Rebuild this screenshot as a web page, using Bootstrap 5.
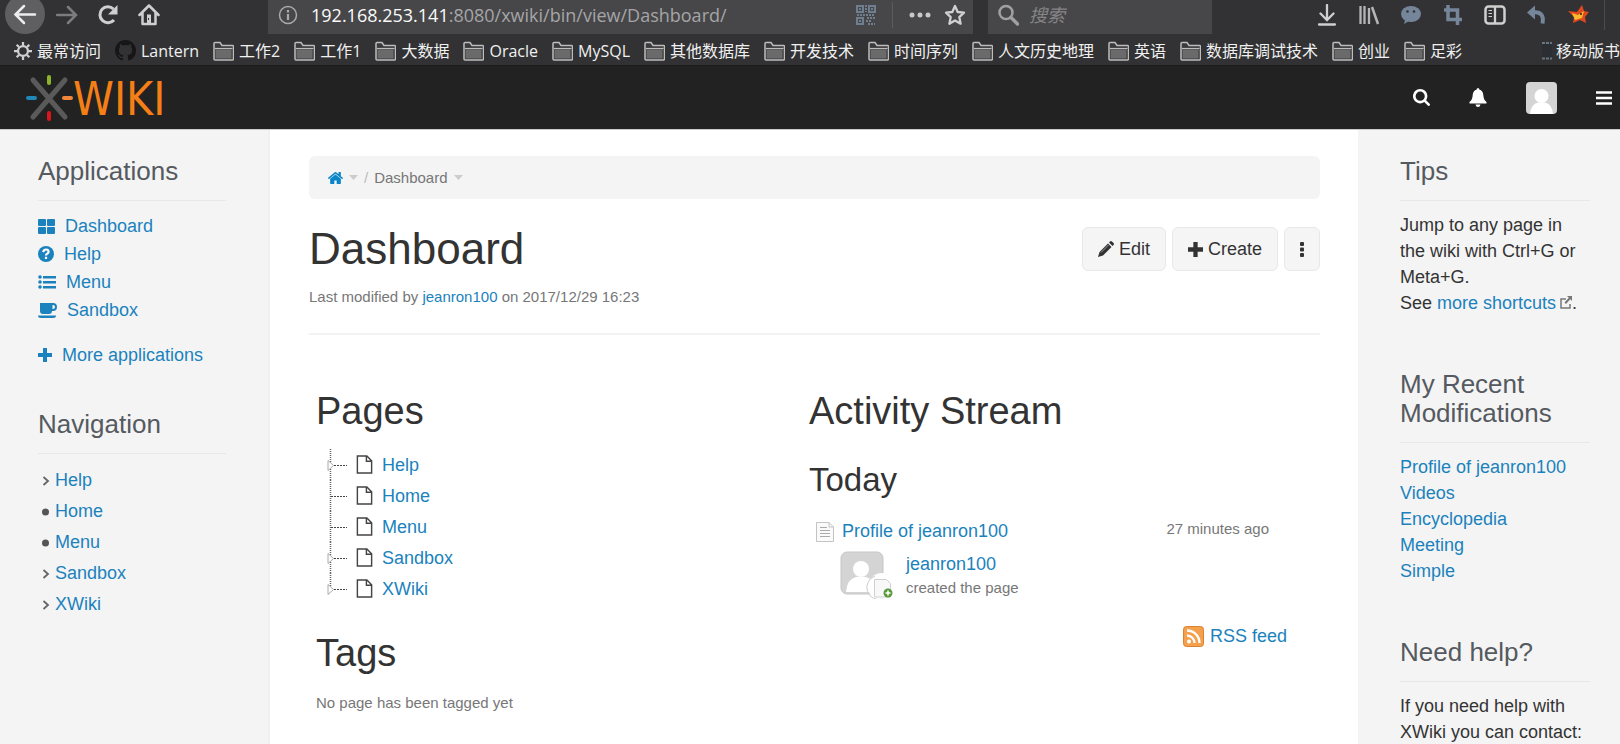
<!DOCTYPE html>
<html lang="en">
<head>
<meta charset="utf-8">
<meta name="viewport" content="width=device-width, initial-scale=1">
<title>Dashboard - XWiki</title>
<link href="https://cdn.jsdelivr.net/npm/bootstrap@5.3.0/dist/css/bootstrap.min.css" rel="stylesheet">
<style>
  body { font: 18px/26px "Liberation Sans", Arial, sans-serif; color: #333; background: #fff; }
  a { color: #1b82bd; text-decoration: none; }
  svg { display: block; flex: none; }
  h1, h2, h3, h4, p, ul { margin: 0; }

  /* browser chrome */
  .chrome { background: #323234; color: #f0f0f0; font: 16px/24px "Open Sans", "Noto Sans CJK SC", sans-serif; }
  .tools { height: 34px; }
  .chrome-btn { background: none; border: 0; padding: 0; color: #c8c8c8; display: flex; align-items: center; }
  .nav-btns { width: 268px; padding-left: 5px; gap: 11px; }
  .field { background: #474749; font-size: 18px; color: #a5a5a7; padding-bottom: 4px; }
  .field input { background: none; border: 0; outline: 0; padding: 0; color: inherit; min-width: 0; }
  .field input::placeholder { color: #858587; font-style: italic; opacity: 1; }
  .url-field { flex: 1 1 705px; padding-left: 10px; padding-right: 7px; }
  .url-host { color: #fafafa; margin-left: 13px; }
  .dots-btn { margin-right: 13px; }
  .search-field { flex: 0 1 224px; margin-left: 15px; padding-left: 10px; gap: 10px; }
  .field-split { width: 1px; height: 26px; background: #5c5c5e; }
  .tool-icons { flex: 0 1 408px; padding-right: 15px; padding-bottom: 4px; gap: 20px; }
  .tool-split { width: 1px; height: 30px; background: #4c4c4e; margin-left: -6px; }
  .marks { height: 32px; padding: 2px 0 0 14px; gap: 14px; white-space: nowrap; border-bottom: 1px solid #1b1b1b; }
  .marks a { color: inherit; display: flex; align-items: center; gap: 5px; flex: none; }
  .marks .last-mark { gap: 4px; }

  /* wiki header */
  .wiki-bar { background: #222; height: 64px; border-bottom: 1px solid #ccc; padding: 0 8px 0 26px; gap: 39px; }
  .wiki-bar .logo-text { font: 46px "DejaVu Sans Condensed", "DejaVu Sans", sans-serif; fill: #f57f17; }
  .wiki-bar button { background: none; border: 0; padding: 0; color: #fff; }

  /* side panels */
  .side { background: #f4f4f4; padding-top: 27px; }
  .side-left { flex: 0 0 270px; padding-left: 38px; padding-right: 42px; border-right: 2px solid #f0f0f0; }
  .side-right { flex: 0 0 262px; padding-left: 42px; padding-right: 30px; }
  .side h2 { font-size: 26px; line-height: 29px; font-weight: 400; color: #555a60; padding-bottom: 14px; border-bottom: 1px solid #e8e8e8; margin-bottom: 11px; }
  .side section + section { margin-top: 54px; }
  .side-left section + section { margin-top: 41px; }
  .apps a { display: flex; align-items: center; line-height: 28px; gap: 10px; }
  .apps .more { margin-top: 17px; }
  .tree-nav a { display: flex; align-items: center; line-height: 31px; gap: 5px; padding-left: 3px; }
  .recent a { display: block; }

  /* main column */
  .content { padding: 26px 38px 0 39px; }
  .crumbs { background: #f4f4f4; border-radius: 6px; height: 43px; padding: 0 19px; gap: 6px; }
  .minor { font-size: 15px; line-height: 22px; color: #777; }
  .title-row { margin-top: 26px; }
  .title-row h1 { font-size: 44px; line-height: 48px; font-weight: 400; }
  .actions { gap: 6px; padding-top: 2px; }
  .tool-btn { height: 44px; padding: 0 15px; border: 1px solid #e8e8e8; background: #f5f5f5; border-radius: 6px; font-size: 18px; color: #333; display: flex; align-items: center; gap: 5px; }
  .meta { margin-top: 13px; padding-bottom: 25px; border-bottom: 2px solid #f3f3f3; }
  .gadgets { padding: 55px 18px 0 7px; }
  .gadgets h2 { font-size: 38px; line-height: 42px; font-weight: 400; }
  .gadgets h3 { font-size: 33px; line-height: 36px; font-weight: 400; margin: 30px 0 20px; }
  .page-tree { margin: 17px 0 28px; padding-left: 9px; }
  .page-tree li { height: 31px; display: flex; align-items: center; }
  .page-tree a { margin-left: 9px; }
  .no-tags { padding-top: 18px; }
  .event { padding: 0 33px 0 7px; }
  .who { padding-left: 31px; margin-top: 7px; gap: 13px; }
  .rss { margin: 24px 15px 0 0; gap: 6px; }
</style>
</head>
<body class="min-vh-100 d-flex flex-column overflow-hidden">

<!-- shared symbols -->
<svg width="0" height="0" class="position-absolute" aria-hidden="true">
  <symbol id="folder" viewBox="0 0 21 20"><path d="M1 18V2.500q0-1 1-1h5l2 3h10.500q1 0 1 1V18q0 1-1 1h-17.500q-1 0-1-1z" fill="#3a3a3c" stroke="#bdbdbd" stroke-width="1.500"/><path d="M2.500 8.500h16v9h-16z" fill="#6a6a6a"/><path d="M2 7.500h17.500" stroke="#bdbdbd" stroke-width="1.200"/></symbol>
  <symbol id="leaf" viewBox="0 0 17 20"><path d="M1 1h10l5 5v13H1z M10.500 1v5.500H16" fill="#fff" stroke="#444" stroke-width="1.500"/></symbol>
  <symbol id="branch" viewBox="0 0 26 31"><path d="M5.500 0V31" stroke="#666" stroke-width="1.500" stroke-dasharray="1 1"/><path d="M6 16.500H22" stroke="#444" stroke-width="1" stroke-dasharray="2 1"/></symbol>
  <symbol id="branch-open" viewBox="0 0 26 31"><path d="M5.500 0V31" stroke="#666" stroke-width="1.500" stroke-dasharray="1 1"/><path d="M9 16.500H22" stroke="#444" stroke-width="1" stroke-dasharray="2 1"/><path d="M3 11.500v10l5.500-5z" fill="#fff" stroke="#aaa"/></symbol>
  <symbol id="branch-last" viewBox="0 0 26 31"><path d="M5.500 0V13" stroke="#666" stroke-width="1.500" stroke-dasharray="1 1"/><path d="M9 16.500H22" stroke="#444" stroke-width="1" stroke-dasharray="2 1"/><path d="M3 11.500v10l5.500-5z" fill="#fff" stroke="#aaa"/></symbol>
  <symbol id="angle" viewBox="0 0 8 12"><path d="M2 2l4.500 4L2 10" fill="none" stroke="#666" stroke-width="1.800"/></symbol>
  <symbol id="dot" viewBox="0 0 8 12"><circle cx="4" cy="6" r="3.500" fill="#555"/></symbol>
  <symbol id="plus" viewBox="0 0 14 14"><path d="M5 0h4v5h5v4H9v5H5V9H0V5h5z" fill="currentColor"/></symbol>
  <symbol id="caret" viewBox="0 0 9 5"><path d="M0 0h9L4.500 5z" fill="#ccc"/></symbol>
  <symbol id="person" viewBox="0 0 31 32"><rect width="31" height="32" rx="4" fill="#d4d4d4"/><circle cx="15.500" cy="14" r="7" fill="#fff"/><path d="M4 32q1-10 8-11.500h7q7 1.500 8 11.500z" fill="#fff"/></symbol>
</svg>

<header class="chrome">
  <div class="tools d-flex align-items-stretch overflow-hidden">
    <div class="nav-btns d-flex flex-shrink-0">
      <button class="chrome-btn" aria-label="Back"><svg width="40" height="34" viewBox="0 0 40 34" fill="none"><circle cx="20" cy="14" r="20" fill="#5f5f61"/><path d="M30 14.500H11M19 6l-8.500 8.500L19 23" stroke="#ededed" stroke-width="2.500" stroke-linecap="round"/></svg></button>
      <button class="chrome-btn" aria-label="Forward"><svg width="22" height="34" viewBox="0 0 22 34" fill="none"><path d="M1 15h19M12 7l8 8-8 8" stroke="#7c7c7e" stroke-width="2.500" stroke-linecap="round"/></svg></button>
      <button class="chrome-btn ms-2" aria-label="Reload"><svg width="22" height="34" viewBox="0 0 22 34" fill="none"><path d="M16.500 9A8 8 0 1 0 17 20" stroke="#cfcfcf" stroke-width="3"/><path d="M20.500 5v9.500H11z" fill="#cfcfcf"/></svg></button>
      <button class="chrome-btn ms-2" aria-label="Home"><svg width="22" height="34" viewBox="0 0 22 34" fill="none"><path d="M1.500 15L11 5.500 20.500 15M4.500 13v11h13V13" stroke="#cfcfcf" stroke-width="2.500" stroke-linecap="round" stroke-linejoin="round"/><path d="M9 14.500h4V23H9z" fill="#cfcfcf"/><path d="M10.500 18v2" stroke="#323234"/></svg></button>
    </div>
    <div class="field url-field d-flex align-items-center">
      <svg width="20" height="20" viewBox="0 0 20 20" fill="none" stroke="#a9a9ab"><circle cx="10" cy="10" r="8.500" stroke-width="1.500"/><path d="M10 9v6M10 5v2.500" stroke-width="2.200"/></svg>
      <label class="url-host" for="address">192.168.253.141</label>
      <input id="address" class="flex-grow-1" type="text" value=":8080/xwiki/bin/view/Dashboard/">
      <svg class="me-3" width="20" height="20" viewBox="0 0 20 20" fill="none" stroke="#6f7f90" stroke-width="2"><path d="M1 1h6v6H1zM13 1h6v6h-6zM1 13h6v6H1z"/><path d="M4 3v2M16 3v2M4 15v2M9 1h2M10 3v4M1 10h18M11 13h8M10 16h6M12 19h7" stroke-dasharray="2 1"/></svg>
      <span class="field-split me-3"></span>
      <button class="chrome-btn dots-btn" aria-label="Page actions"><svg width="22" height="6" viewBox="0 0 22 6" fill="currentColor"><circle cx="3" cy="3" r="2.500"/><circle cx="11" cy="3" r="2.500"/><circle cx="19" cy="3" r="2.500"/></svg></button>
      <button class="chrome-btn" aria-label="Bookmark"><svg width="22" height="22" viewBox="0 0 22 22" fill="none"><path d="M11 2l2.700 6 6.300.7-4.700 4.400 1.300 6.600L11 16.500l-5.600 3.200 1.300-6.600L2 8.700 8.300 8z" stroke="#d0d0d0" stroke-width="2.300" stroke-linejoin="round"/></svg></button>
    </div>
    <div class="field search-field d-flex align-items-center">
      <svg width="21" height="22" viewBox="0 0 21 22" fill="none" stroke="#a0a0a2"><circle cx="8" cy="8.500" r="6.500" stroke-width="2.500"/><path d="M13 13.500l6.500 6.500" stroke-width="3.500" stroke-linecap="round"/></svg>
      <input class="w-100" type="search" aria-label="Search" placeholder="搜索">
    </div>
    <div class="tool-icons d-flex align-items-center justify-content-end">
      <button class="chrome-btn" aria-label="Downloads"><svg width="22" height="22" viewBox="0 0 22 22" fill="none" stroke="#cfcfcf" stroke-width="2.300" stroke-linecap="round"><path d="M11 1v14M4.500 9.500L11 16l6.500-6.500M3 20.500h16"/></svg></button>
      <button class="chrome-btn" aria-label="Library"><svg width="22" height="20" viewBox="0 0 22 20" fill="none" stroke="#b5b5b5"><path d="M2.500 1v18M6.500 1v18M11 3v16" stroke-width="2.300"/><path d="M14 2l6 17" stroke-width="2.500"/></svg></button>
      <button class="chrome-btn" aria-label="Chat"><svg width="22" height="20" viewBox="0 0 22 20"><ellipse cx="11" cy="9" rx="10" ry="8" fill="#75859a"/><path d="M5 15l-1 4 5-3z" fill="#75859a"/><circle cx="7.500" cy="6.500" r="1.300" fill="#323234"/><circle cx="14" cy="6.500" r="1.300" fill="#323234"/></svg></button>
      <button class="chrome-btn" aria-label="Crop"><svg width="22" height="20" viewBox="0 0 22 20" fill="none" stroke="#75859a" stroke-width="3.500"><path d="M6 0v14.500h14M2 5h13.500v15"/></svg></button>
      <button class="chrome-btn" aria-label="Sidebar"><svg width="22" height="20" viewBox="0 0 22 20" fill="none" stroke="#cfcfcf"><rect x="1.500" y="1.500" width="19" height="17" rx="3" stroke-width="2.500"/><path d="M11 2v16" stroke-width="2.300"/><path d="M4.500 5.500H8M4.500 8.500H8M4.500 11.500H8"/></svg></button>
      <button class="chrome-btn" aria-label="Undo"><svg width="22" height="20" viewBox="0 0 22 20" fill="none"><path d="M1 7.500L9 .5v14z" fill="#75859a"/><path d="M7 7.500c8-1 11 3 9.500 11" stroke="#75859a" stroke-width="4"/></svg></button>
      <button class="chrome-btn" aria-label="Extension"><svg width="22" height="20" viewBox="0 0 22 20"><path d="M14 0l2 6 5 1-4 5 1 6-6-3-7 3 1-6-6-6 9 1z" fill="#e0491f"/><path d="M4 8l6 2 6-4-2 7-7 2z" fill="#fdb92c"/><circle cx="13" cy="9" r="1" fill="#222"/></svg></button>
      <span class="tool-split"></span>
    </div>
  </div>
  <nav class="marks d-flex align-items-center" aria-label="Bookmarks">
    <a href="#"><svg width="18" height="18" viewBox="0 0 20 20" fill="none" stroke="#d0d0d0"><circle cx="10" cy="10" r="5.500" stroke-width="2.500"/><path d="M10 0v4M10 16v4M0 10h4M16 10h4M3 3l2.500 2.500M14.500 14.500L17 17M17 3l-2.500 2.500M5.500 14.500L3 17" stroke-width="2.500"/></svg>最常访问</a>
    <a href="#"><svg width="21" height="21" viewBox="0 0 16 16"><path fill="#161618" d="M8 0C3.580 0 0 3.580 0 8c0 3.540 2.290 6.530 5.470 7.590.4.070.55-.17.55-.38 0-.19-.01-.82-.01-1.490-2.010.37-2.530-.49-2.690-.94-.09-.23-.48-.94-.82-1.130-.28-.15-.68-.52-.01-.53.63-.01 1.080.58 1.230.82.72 1.210 1.870.87 2.330.66.07-.52.28-.87.51-1.070-1.780-.2-3.640-.89-3.640-3.950 0-.87.31-1.590.82-2.150-.08-.2-.36-1.020.08-2.120 0 0 .67-.21 2.200.82A7.600 7.600 0 0 1 8 3.860c.68 0 1.360.09 2 .27 1.530-1.040 2.200-.82 2.200-.82.44 1.100.16 1.920.08 2.120.51.56.82 1.270.82 2.150 0 3.070-1.870 3.750-3.650 3.950.29.25.54.73.54 1.480 0 1.070-.01 1.930-.01 2.200 0 .21.15.46.55.38A8 8 0 0 0 16 8c0-4.420-3.580-8-8-8z"/></svg>Lantern</a>
    <a href="#"><svg width="21" height="20"><use href="#folder"/></svg>工作2</a>
    <a href="#"><svg width="21" height="20"><use href="#folder"/></svg>工作1</a>
    <a href="#"><svg width="21" height="20"><use href="#folder"/></svg>大数据</a>
    <a href="#"><svg width="21" height="20"><use href="#folder"/></svg>Oracle</a>
    <a href="#"><svg width="21" height="20"><use href="#folder"/></svg>MySQL</a>
    <a href="#"><svg width="21" height="20"><use href="#folder"/></svg>其他数据库</a>
    <a href="#"><svg width="21" height="20"><use href="#folder"/></svg>开发技术</a>
    <a href="#"><svg width="21" height="20"><use href="#folder"/></svg>时间序列</a>
    <a href="#"><svg width="21" height="20"><use href="#folder"/></svg>人文历史地理</a>
    <a href="#"><svg width="21" height="20"><use href="#folder"/></svg>英语</a>
    <a href="#"><svg width="21" height="20"><use href="#folder"/></svg>数据库调试技术</a>
    <a href="#"><svg width="21" height="20"><use href="#folder"/></svg>创业</a>
    <a href="#"><svg width="21" height="20"><use href="#folder"/></svg>足彩</a>
    <a href="#" class="last-mark ms-auto"><svg width="10" height="18" viewBox="0 0 10 18"><rect width="10" height="18" rx="2" fill="#2b2f33"/><path d="M0 1h10M0 16.500h10" stroke="#6a7680" stroke-width="2" stroke-dasharray="3 1"/></svg>移动版书</a>
  </nav>
</header>

<div class="wiki-bar d-flex align-items-center">
  <a href="#" class="me-auto" aria-label="XWiki home">
    <svg width="148" height="50" viewBox="26 73 148 50" fill="none" stroke-linecap="round">
      <path d="M33 80l32 37M65 80L33 117" stroke="#5a5a5a" stroke-width="5"/>
      <path d="M49 77v6" stroke="#8ab62c" stroke-width="4"/><path d="M49 113v6" stroke="#d8161c" stroke-width="4"/>
      <path d="M28 98h7" stroke="#2088b8" stroke-width="4"/><path d="M64 98h7" stroke="#f0873a" stroke-width="4"/>
      <text class="logo-text" x="73" y="115">WIKI</text>
    </svg>
  </a>
  <button aria-label="Search"><svg width="17" height="17" viewBox="64 128 1664 1664" fill="currentColor"><path d="M1216 832q0-185-131.500-316.500t-316.500-131.500-316.500 131.500-131.500 316.500 131.500 316.500 316.500 131.500 316.500-131.500 131.500-316.500zm512 832q0 52-38 90t-90 38q-54 0-90-38l-343-342q-179 124-399 124-143 0-273.500-55.500t-225-150-150-225-55.500-273.500 55.500-273.500 150-225 225-150 273.500-55.500 273.500 55.500 225 150 150 225 55.500 273.500q0 220-124 399l343 343q37 37 37 90z"/></svg></button>
  <button aria-label="Notifications"><svg width="18" height="19" viewBox="0 0 18 19" fill="currentColor"><path d="M9 0q1.300 0 1.300 1.500Q14 2.500 14.300 7q.2 5 3.200 7v1.500H.5V14q3-2 3.200-7Q4 2.500 7.700 1.500 7.700 0 9 0zM6.500 16.500h5Q11 19 9 19t-2.500-2.500z"/></svg></button>
  <a href="#" aria-label="Profile"><svg width="31" height="32"><use href="#person"/></svg></a>
  <button aria-label="Menu"><svg width="16" height="14" viewBox="0 0 16 14"><path d="M0 1.500h16M0 7h16M0 12.500h16" stroke="#fff" stroke-width="2.600"/></svg></button>
</div>

<div class="d-flex flex-grow-1">
  <aside class="side side-left">
    <section class="apps">
      <h2>Applications</h2>
      <a href="#"><svg width="17" height="15" viewBox="0 0 17 15" fill="currentColor"><rect width="8" height="7" rx="1"/><rect x="9" width="8" height="7" rx="1"/><rect y="8" width="8" height="7" rx="1"/><rect x="9" y="8" width="8" height="7" rx="1"/></svg>Dashboard</a>
      <a href="#"><svg width="16" height="16" viewBox="0 0 16 16"><circle cx="8" cy="8" r="8" fill="currentColor"/><path d="M5.300 6.200Q5.500 3.500 8 3.500t2.600 2.300Q10.600 7 9 7.900 8 8.500 8 9.500M8 10.800v2.200" fill="none" stroke="#fff" stroke-width="2.200"/></svg>Help</a>
      <a href="#"><svg width="18" height="14" viewBox="0 0 18 14" fill="currentColor"><circle cx="2" cy="2" r="1.800"/><circle cx="2" cy="7" r="1.800"/><circle cx="2" cy="12" r="1.800"/><path d="M5 1h13v2.400H5zM5 6h13v2.400H5zM5 11h13v2.400H5z"/></svg>Menu</a>
      <a href="#"><svg width="19" height="15" viewBox="0 0 19 15" fill="currentColor"><path fill-rule="evenodd" d="M2 0h13q4 0 4 4t-4 4h-1q0 3-3 3H5q-3 0-3-3zM14.500 2v4h.5q2 0 2-2t-2-2z"/><path d="M0 12.500h18q0 2.500-3 2.500H3q-3 0-3-2.500z"/></svg>Sandbox</a>
      <a href="#" class="more"><svg width="14" height="14"><use href="#plus"/></svg>More applications</a>
    </section>
    <section class="tree-nav">
      <h2>Navigation</h2>
      <a href="#"><svg width="9" height="12"><use href="#angle"/></svg>Help</a>
      <a href="#"><svg width="9" height="12"><use href="#dot"/></svg>Home</a>
      <a href="#"><svg width="9" height="12"><use href="#dot"/></svg>Menu</a>
      <a href="#"><svg width="9" height="12"><use href="#angle"/></svg>Sandbox</a>
      <a href="#"><svg width="9" height="12"><use href="#angle"/></svg>XWiki</a>
    </section>
  </aside>

  <main class="content flex-grow-1">
    <nav class="crumbs minor d-flex align-items-center" aria-label="Breadcrumb">
      <a href="#" aria-label="Home"><svg width="15" height="12" viewBox="89 253 1614 1283" fill="#0a86c8"><path d="M1472 992v480q0 26-19 45t-45 19h-384v-384h-256v384h-384q-26 0-45-19t-19-45v-480q0-1 .5-3t.5-3l575-474 575 474q1 2 1 6zm223-69l-62 74q-8 9-21 11h-3q-13 0-21-7l-692-577-692 577q-12 8-24 7-13-2-21-11l-62-74q-8-10-7-23.500t11-21.500l719-599q32-26 76-26t76 26l244 204v-195q0-14 9-23t23-9h192q14 0 23 9t9 23v408l219 182q10 8 11 21.500t-7 23.500z"/></svg></a>
      <svg width="9" height="5"><use href="#caret"/></svg>
      <span class="text-black-50 opacity-50">/</span>
      <span>Dashboard</span>
      <svg width="9" height="5"><use href="#caret"/></svg>
    </nav>
    <div class="title-row d-flex justify-content-between align-items-start">
      <h1>Dashboard</h1>
      <div class="actions d-flex">
        <button class="tool-btn"><svg width="16" height="16" viewBox="0 0 16 16" fill="currentColor"><path d="M11 1.500l1-1q1-1 2 0L15.500 2q1 1 0 2l-1 1zM10 2.500L13.500 6 5 14.500l-5 1.500 1.500-5z"/><path d="M3 11.500L10.500 4" stroke="#999"/></svg>Edit</button>
        <button class="tool-btn"><svg width="15" height="15"><use href="#plus"/></svg>Create</button>
        <button class="tool-btn" aria-label="More actions"><svg width="4" height="15" viewBox="0 0 4 15" fill="currentColor"><rect width="4" height="4" rx="1"/><rect y="5.500" width="4" height="4" rx="1"/><rect y="11" width="4" height="4" rx="1"/></svg></button>
      </div>
    </div>
    <p class="meta minor">Last modified by <a href="#">jeanron100</a> on 2017/12/29 16:23</p>

    <div class="gadgets row g-0">
      <section class="col-6">
        <h2>Pages</h2>
        <ul class="page-tree list-unstyled">
          <li><svg width="31" height="31" viewBox="0 0 31 31"><use href="#branch-open" width="26" height="31"/></svg><svg width="17" height="19"><use href="#leaf"/></svg><a href="#">Help</a></li>
          <li><svg width="31" height="31" viewBox="0 0 31 31"><use href="#branch" width="26" height="31"/></svg><svg width="17" height="19"><use href="#leaf"/></svg><a href="#">Home</a></li>
          <li><svg width="31" height="31" viewBox="0 0 31 31"><use href="#branch" width="26" height="31"/></svg><svg width="17" height="19"><use href="#leaf"/></svg><a href="#">Menu</a></li>
          <li><svg width="31" height="31" viewBox="0 0 31 31"><use href="#branch-open" width="26" height="31"/></svg><svg width="17" height="19"><use href="#leaf"/></svg><a href="#">Sandbox</a></li>
          <li><svg width="31" height="31" viewBox="0 0 31 31"><use href="#branch-last" width="26" height="31"/></svg><svg width="17" height="19"><use href="#leaf"/></svg><a href="#">XWiki</a></li>
        </ul>
        <h2>Tags</h2>
        <p class="minor no-tags">No page has been tagged yet</p>
      </section>
      <section class="col-6">
        <h2>Activity Stream</h2>
        <h3>Today</h3>
        <div class="event d-flex align-items-start">
          <svg class="me-2 mt-1" width="18" height="20" viewBox="0 0 18 20"><path d="M.5.500h12.500l4.500 4.500v14.500H.5z" fill="#fafafa" stroke="#c4c4c4"/><path d="M13 .5V5h4.500" fill="none" stroke="#c4c4c4"/><path d="M4 5.500h7M4 8.500h10M4 11.500h10M4 14.500h10" stroke="#aaa"/></svg>
          <a href="#">Profile of jeanron100</a>
          <span class="minor ms-auto">27 minutes ago</span>
        </div>
        <div class="who d-flex align-items-start">
          <svg width="53" height="48" viewBox="0 0 53 48">
            <rect x="1" y="1" width="42" height="42" rx="6" fill="#d4d4d4" stroke="#c6c6c6"/>
            <circle cx="21" cy="18" r="8" fill="#fff"/><path d="M6 41q1-13 10-15h10q9 2 10 15z" fill="#fff"/>
            <circle cx="42" cy="36" r="14" fill="#fff"/><path d="M43 48A12 12 0 0 1 35 25" fill="none" stroke="#ccc"/>
            <path d="M34.500 28.500h12l4 4V46h-16z" fill="#f8f8f8" stroke="#d0d0d0"/>
            <circle cx="48" cy="42" r="4.500" fill="#5b9a3c"/><path d="M48 39.500v5M45.500 42h5" stroke="#fff" stroke-width="1.500"/>
          </svg>
          <div><a href="#">jeanron100</a><div class="minor">created the page</div></div>
        </div>
        <a href="#" class="rss d-flex align-items-center justify-content-end"><svg width="21" height="21" viewBox="0 0 21 21" fill="none"><rect x=".5" y=".5" width="20" height="20" rx="3" fill="#f5a04c" stroke="#d9822f"/><circle cx="6" cy="15.500" r="2" fill="#fff"/><path d="M4 9.500a7.500 7.500 0 0 1 7.500 7.500M4 4.500A12.500 12.500 0 0 1 16.500 17" stroke="#fff" stroke-width="2.300"/></svg>RSS feed</a>
      </section>
    </div>
  </main>

  <aside class="side side-right">
    <section>
      <h2>Tips</h2>
      <p>Jump to any page in the wiki with Ctrl+G or Meta+G.<br>See <a href="#">more shortcuts<svg class="d-inline-block align-baseline ms-1" width="12" height="13" viewBox="0 0 12 13" fill="none"><path d="M6 3H1v9h9V8" stroke="#777" stroke-width="1.500"/><path d="M7 0h5v5l-1.700-1.700L6 8 4.500 6.500l4.300-4.700z" fill="#777"/></svg></a>.</p>
    </section>
    <section class="recent">
      <h2>My Recent Modifications</h2>
      <a href="#">Profile of jeanron100</a>
      <a href="#">Videos</a>
      <a href="#">Encyclopedia</a>
      <a href="#">Meeting</a>
      <a href="#">Simple</a>
    </section>
    <section>
      <h2>Need help?</h2>
      <p>If you need help with XWiki you can contact:</p>
    </section>
  </aside>
</div>

<script src="https://cdn.jsdelivr.net/npm/bootstrap@5.3.0/dist/js/bootstrap.bundle.min.js"></script>
</body>
</html>
